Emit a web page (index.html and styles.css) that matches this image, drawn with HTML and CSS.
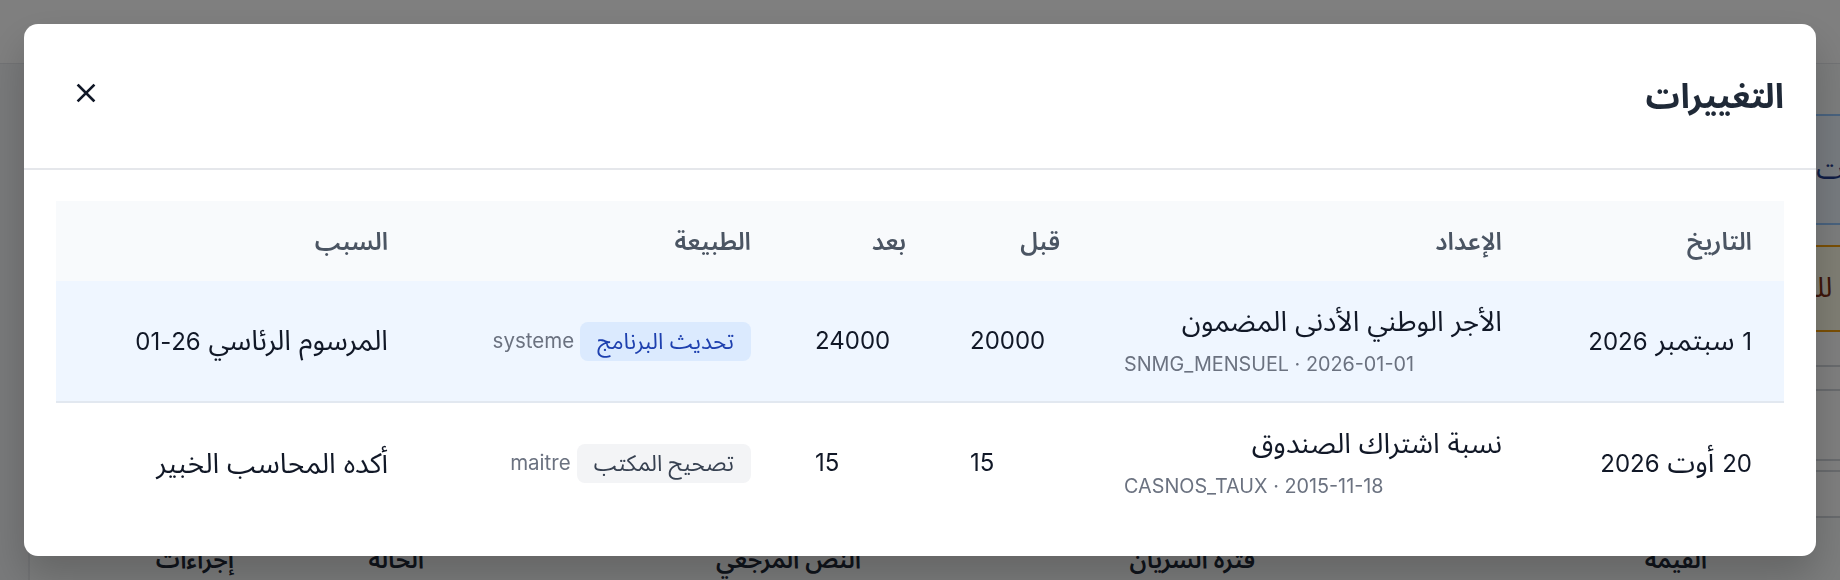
FILE: index.html
```html
<!DOCTYPE html>
<html lang="ar">
<head>
<meta charset="utf-8">
<title>التغييرات</title>
<link rel="stylesheet" href="styles.css">
</head>
<body>
<div class="page">
  <header class="topbar"></header>
  <main class="main">
    <section class="card" dir="rtl">
      <div class="notice notice-blue"><span>مجموعة الإعدادات القانونية</span></div>
      <div class="notice notice-amber"><span>تنبيه للمستخدم</span></div>
      <div class="bg-line h35"></div>
      <div class="bg-line h24"></div>
      <div class="bg-line h70"></div>
      <div class="bg-line h11"></div>
      <div class="bg-line h46"></div>
      <div class="bg-thead" dir="ltr">
        <span class="bg-th w204">إجراءات</span>
        <span class="bg-th w190">الحالة</span>
        <span class="bg-th w437">النص المرجعي</span>
        <span class="bg-th w394">فترة السريان</span>
        <span class="bg-th w452">القيمة</span>
      </div>
    </section>
  </main>
</div>

<div class="overlay">
  <div class="modal" dir="rtl" role="dialog" aria-label="التغييرات">
    <div class="modal-header">
      <h2 class="modal-title">التغييرات</h2>
      <button class="close-btn" aria-label="إغلاق">
        <svg width="20" height="20" viewBox="0 0 20 20" fill="none" stroke="currentColor" stroke-width="2.6" stroke-linecap="square">
          <path d="M2.5 2.5 L17.5 17.5 M17.5 2.5 L2.5 17.5"/>
        </svg>
      </button>
    </div>
    <div class="modal-body">
      <table class="changes">
        <colgroup>
          <col class="c-date"><col class="c-setting"><col class="c-before"><col class="c-after"><col class="c-nature"><col class="c-reason">
        </colgroup>
        <thead>
          <tr>
            <th>التاريخ</th>
            <th>الإعداد</th>
            <th>قبل</th>
            <th>بعد</th>
            <th>الطبيعة</th>
            <th>السبب</th>
          </tr>
        </thead>
        <tbody>
          <tr class="active">
            <td><span class="n">1</span> سبتمبر <span class="n">2026</span></td>
            <td>
              <div class="setting-name">الأجر الوطني الأدنى المضمون</div>
              <div class="setting-code" dir="ltr">SNMG_MENSUEL · 2026-01-01</div>
            </td>
            <td class="num" dir="ltr">20000</td>
            <td class="num" dir="ltr">24000</td>
            <td>
              <div class="nature">
                <span class="badge badge-blue">تحديث البرنامج</span>
                <span class="who">systeme</span>
              </div>
            </td>
            <td>المرسوم الرئاسي <span class="n">26-01</span></td>
          </tr>
          <tr>
            <td><span class="n">20</span> أوت <span class="n">2026</span></td>
            <td>
              <div class="setting-name">نسبة اشتراك الصندوق</div>
              <div class="setting-code" dir="ltr">CASNOS_TAUX · 2015-11-18</div>
            </td>
            <td class="num" dir="ltr">15</td>
            <td class="num" dir="ltr">15</td>
            <td>
              <div class="nature">
                <span class="badge badge-gray">تصحيح المكتب</span>
                <span class="who">maitre</span>
              </div>
            </td>
            <td>أكده المحاسب الخبير</td>
          </tr>
        </tbody>
      </table>
    </div>
  </div>
</div>
</body>
</html>
```

FILE: styles.css
```css
* { box-sizing: border-box; }

html, body {
  margin: 0;
  padding: 0;
  width: 1840px;
  height: 580px;
  overflow: hidden;
}

body {
  font-family: Inter, "Noto Sans Arabic", "Noto Sans", "DejaVu Sans", sans-serif;
  background: #f3f4f6;
  color: #111827;
}

/* ---------- background page ---------- */
.page {
  width: 1840px;
  height: 580px;
  overflow: hidden;
}

.topbar {
  height: 64px;
  background: #ffffff;
  border-bottom: 1px solid #e5e7eb;
}

.main {
  padding-left: 28px;
}

.card {
  width: 1900px;
  height: 620px;
  background: #f9fafb;
  border-left: 2px solid #e5e7eb;
  padding-top: 50px;
  display: flex;
  flex-direction: column;
}

.notice {
  font-size: 28px;
  display: flex;
  align-items: center;
  justify-content: flex-end;
  margin-left: 1760px;
  margin-right: -200px;
  overflow: hidden;
  white-space: nowrap;
}

.notice span {
  margin-left: -70px;
}

.notice-blue {
  height: 111px;
  background: #eff6ff;
  border-top: 2px solid #93c5fd;
  border-bottom: 2px solid #93c5fd;
  color: #1e3a8a;
  margin-bottom: 20px;
}

.notice-amber {
  height: 87px;
  background: #fefce8;
  border-top: 2px solid #f59e0b;
  border-bottom: 2px solid #f59e0b;
  color: #7c2d12;
}

.bg-line {
  border-bottom: 2px solid #d1d5db;
  background: #ffffff;
}
.h35 { height: 35px; }
.h24 { height: 24px; }
.h70 { height: 70px; }
.h11 { height: 11px; }
.h46 { height: 46px; }

.bg-thead {
  display: flex;
  height: 84px;
  align-items: center;
  background: #f9fafb;
}

.bg-th {
  text-align: right;
  font-size: 24px;
  font-weight: 600;
  color: #1f2937;
  flex: none;
}
.w204 { width: 204px; }
.w190 { width: 190px; }
.w437 { width: 437px; }
.w394 { width: 394px; }
.w452 { width: 452px; }

/* ---------- overlay + modal ---------- */
.overlay {
  position: fixed;
  inset: 0;
  background: rgba(0, 0, 0, 0.5);
  padding: 24px;
}

.modal {
  width: 1792px;
  height: 532px;
  background: #ffffff;
  border-radius: 14px;
  box-shadow: 0 20px 40px rgba(0, 0, 0, 0.2);
  overflow: hidden;
}

.modal-header {
  height: 146px;
  padding: 0 32px;
  display: flex;
  align-items: center;
  justify-content: space-between;
  border-bottom: 2px solid #e5e7eb;
}

.modal-title {
  margin: 0;
  font-size: 34px;
  font-weight: 700;
  color: #1f2937;
  line-height: 44px;
}

.close-btn {
  width: 60px;
  height: 60px;
  border: none;
  background: transparent;
  color: #111827;
  display: flex;
  align-items: center;
  justify-content: center;
  padding: 0;
  margin-top: -6px;
  cursor: pointer;
}

.modal-body {
  padding: 31px 32px 32px;
}

.changes {
  width: 1728px;
  border-collapse: collapse;
  table-layout: fixed;
}

.c-date { width: 250px; }
.c-setting { width: 442px; }
.c-before { width: 154px; }
.c-after { width: 155px; }
.c-nature { width: 363px; }
.c-reason { width: 364px; }

.changes thead tr {
  background: #f8fafc;
}

.changes th {
  height: 80px;
  padding: 0 32px;
  text-align: right;
  font-size: 24.5px;
  line-height: 36px;
  font-weight: 600;
  color: #4b5563;
  vertical-align: middle;
}

.changes td {
  height: 121px;
  padding: 0 32px;
  text-align: right;
  font-size: 28px;
  line-height: 36px;
  color: #111827;
  vertical-align: middle;
}

.n {
  font-size: 24px;
}

.changes tbody tr.active {
  background: #eff6ff;
  border-bottom: 2px solid #e2e8f0;
}

.changes td.num {
  text-align: left;
  font-size: 24px;
}

.setting-name {
  line-height: 38px;
  margin-top: -2px;
}

.setting-code {
  text-align: left;
  font-size: 19.8px;
  line-height: 30px;
  color: #6b7280;
  margin-top: 9px;
}

.nature {
  display: flex;
  align-items: center;
  gap: 6px;
}

.badge {
  display: inline-flex;
  align-items: center;
  height: 39px;
  padding: 0 17px;
  border-radius: 8px;
  font-size: 22.5px;
}

.badge-blue {
  background: #dbeafe;
  color: #1e40af;
}

.badge-gray {
  background: #f3f4f6;
  color: #374151;
}

.who {
  font-size: 20.5px;
  color: #6b7280;
}
```
